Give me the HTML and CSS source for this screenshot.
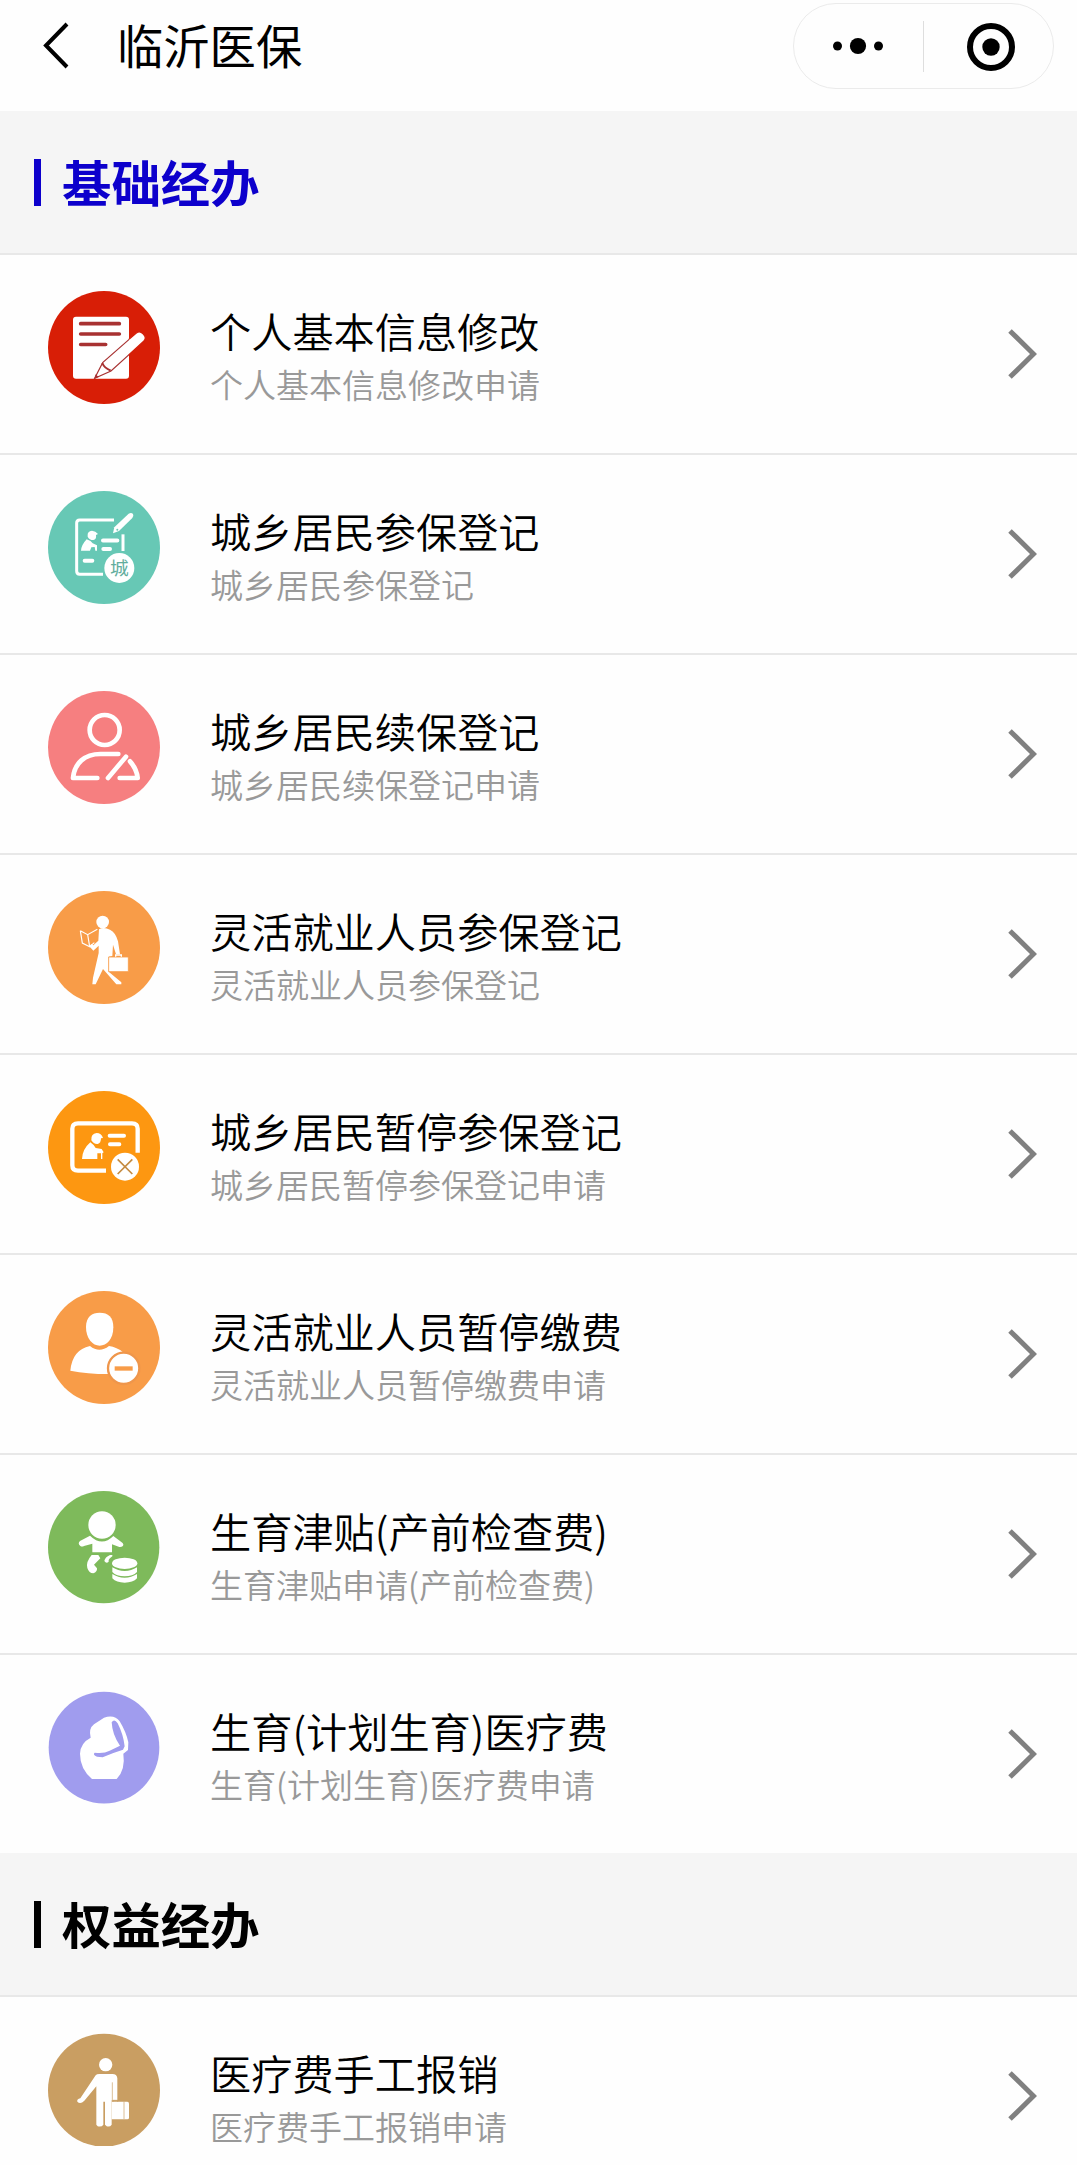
FILE: index.html
```html
<!DOCTYPE html>
<html lang="zh-CN">
<head>
<meta charset="utf-8">
<title>临沂医保</title>
<link rel="stylesheet" href="styles.css">
</head>
<body>
<div class="app">
  <header class="navbar">
    <svg class="back" viewBox="0 0 30 50" fill="none" stroke="#000" stroke-width="4"><path d="M26 4 5 25.500 26 47"/></svg>
    <h1 class="navbar-title">临沂医保</h1>
    <div class="capsule">
      <svg class="capsule-more" viewBox="0 0 60 40"><circle cx="9.500" cy="20" r="4.500"/><circle cx="30" cy="20" r="8.100"/><circle cx="50.500" cy="20" r="4.500"/></svg>
      <span class="capsule-divider"></span>
      <svg class="capsule-close" viewBox="0 0 50 50"><circle cx="25" cy="25" r="21" fill="none" stroke="#000" stroke-width="6"/><circle cx="25" cy="25" r="8.700"/></svg>
    </div>
  </header>

  <main>
    <section>
      <h2 class="section-title section-title--active"><span>基础经办</span></h2>
      <ul class="list">
        <li class="item">
          <svg class="icon" viewBox="54 62 336 339">
            <ellipse cx="222" cy="231.500" rx="168" ry="169.500" fill="#d81e06"/>
            <rect x="129" y="139" width="168" height="186" rx="9" fill="#fff"/>
            <g stroke="#a83232" stroke-width="11" stroke-linecap="round"><path d="M152 160H268M152 191H268M152 222.500H227"/></g>
            <path d="M194 324 218 277 318 189Q329 180 339 190L343 195Q350 204 341 213L243 302Z" fill="#fff" stroke="#a83232" stroke-width="3.500"/>
            <path d="M297 207 318 189Q329 180 339 190L343 195Q350 204 341 213L297 253" fill="#fff" stroke="#d81e06" stroke-width="4"/>
            <path d="M217 278Q222 292 242 301" fill="none" stroke="#a83232" stroke-width="6"/>
            <path d="M193 325 197 312 206 320Z" fill="#a83232"/>
          </svg>
          <div class="item-text"><h3>个人基本信息修改</h3><p>个人基本信息修改申请</p></div>
          <svg class="arrow" viewBox="0 0 30 52"><path d="M3 3 26.500 26 3 49"/></svg>
        </li>
        <li class="item">
          <svg class="icon" viewBox="54 62 336 339">
            <ellipse cx="222" cy="231.500" rx="168" ry="169.500" fill="#67c8b5"/>
            <g fill="none" stroke="#fff" stroke-width="9"><path d="M252 149H149Q140 149 140 158V302Q140 312 149 312H219"/><path d="M279 192V242"/></g>
            <g stroke="#fff" stroke-width="12" stroke-linecap="round"><path d="M219 210.500H262M220 236H240M164 271H187"/></g>
            <path d="M249 189 253 171 296 130Q304 125 309 131Q312 136 307 143L267 182Z" fill="#fff"/>
            <circle cx="262" cy="178" r="3" fill="#67c8b5"/>
            <path d="M173 194Q172 183 186 181Q197 182 204 191L198 194Q200 207 190 209Q178 209 173 199Z" fill="#fff"/>
            <path d="M153 241Q154 224 170 207Q184 212 188 219L201 225V241H196L194 230 184 231 180 241Z" fill="#fff"/>
            <circle cx="268" cy="293" r="45" fill="#fff"/>
            <text class="icon-label" x="268" y="313">城</text>
          </svg>
          <div class="item-text"><h3>城乡居民参保登记</h3><p>城乡居民参保登记</p></div>
          <svg class="arrow" viewBox="0 0 30 52"><path d="M3 3 26.500 26 3 49"/></svg>
        </li>
        <li class="item">
          <svg class="icon" viewBox="54 62 336 339">
            <ellipse cx="222" cy="231.500" rx="168" ry="169.500" fill="#f67f80"/>
            <g fill="none" stroke="#fff" stroke-width="14" stroke-linecap="round" stroke-linejoin="round">
              <circle cx="224" cy="179" r="45"/>
              <path d="M265 251H211C165 251 133 278 129 323H202M234 323 288 259M300 273Q320 295 323 323H269"/>
            </g>
          </svg>
          <div class="item-text"><h3>城乡居民续保登记</h3><p>城乡居民续保登记申请</p></div>
          <svg class="arrow" viewBox="0 0 30 52"><path d="M3 3 26.500 26 3 49"/></svg>
        </li>
        <li class="item">
          <svg class="icon" viewBox="54 62 336 339">
            <ellipse cx="222" cy="231.500" rx="168" ry="169.500" fill="#f89c48"/>
            <circle cx="218" cy="155" r="19" fill="#fff"/>
            <path d="M151 181 173 193 202 177M151 181 157 218 179 229 173 193M179 229 193 217" fill="none" stroke="#fff" stroke-width="3.500"/>
            <path d="M207 177Q221 169 240 178Q257 186 264 213L270 252H258L249 223 247 257 236 259V304L274 336V342H259L219 296 197 342H187L189 322 206 248V226L190 241 178 228 184 221 190 225 205 211Z" fill="#fff"/>
            <path d="M236 260H295V304H236Z" fill="#fff" stroke="#f89c48" stroke-width="2.500"/>
            <path d="M257 259V254H274V259" fill="none" stroke="#fff" stroke-width="4"/>
          </svg>
          <div class="item-text"><h3>灵活就业人员参保登记</h3><p>灵活就业人员参保登记</p></div>
          <svg class="arrow" viewBox="0 0 30 52"><path d="M3 3 26.500 26 3 49"/></svg>
        </li>
        <li class="item">
          <svg class="icon" viewBox="54 62 336 339">
            <ellipse cx="222" cy="231.500" rx="168" ry="169.500" fill="#fd9711"/>
            <path d="M228 301H144Q127 301 127 285V175Q127 159 144 159H306Q323 159 323 175V247" fill="none" stroke="#fff" stroke-width="13"/>
            <path d="M239 196H282M240 222H268" stroke="#fff" stroke-width="12" stroke-linecap="round"/>
            <path d="M184 210Q182 190 200 188Q214 188 219 203L213 204Q213 219 203 221Q191 222 184 210Z" fill="#fff"/>
            <path d="M156 266Q157 237 181 216Q189 221 197 233L215 236 221 246 217 249V266H213V249H202V266Z" fill="#fff"/>
            <circle cx="285" cy="289" r="42" fill="#fff"/>
            <path d="M263 267 307 311M307 267 263 311" stroke="#c58b40" stroke-width="5"/>
          </svg>
          <div class="item-text"><h3>城乡居民暂停参保登记</h3><p>城乡居民暂停参保登记申请</p></div>
          <svg class="arrow" viewBox="0 0 30 52"><path d="M3 3 26.500 26 3 49"/></svg>
        </li>
        <li class="item">
          <svg class="icon" viewBox="54 62 336 339">
            <ellipse cx="222" cy="231.500" rx="168" ry="169.500" fill="#f89c48"/>
            <path d="M121 301Q127 238 180 227Q208 250 237 227Q260 230 281 247L245 311Q178 312 121 301Z" fill="#fff"/>
            <path d="M168 170C168 139 186 127 209 127C235 127 250 140 250 171C250 207 230 226 209 226C188 226 168 205 168 170Z" fill="#fff"/>
            <circle cx="281" cy="294" r="47" fill="#fff" stroke="#ef964b" stroke-width="7"/>
            <path d="M254 294.500H308" stroke="#f89c48" stroke-width="13"/>
          </svg>
          <div class="item-text"><h3>灵活就业人员暂停缴费</h3><p>灵活就业人员暂停缴费申请</p></div>
          <svg class="arrow" viewBox="0 0 30 52"><path d="M3 3 26.500 26 3 49"/></svg>
        </li>
        <li class="item">
          <svg class="icon" viewBox="54 62 336 339">
            <ellipse cx="221" cy="230.500" rx="167" ry="168.500" fill="#7eba5b"/>
            <path d="M180 196 150 212Q142 220 151 227Q156 230 162 227L187 220V246H246V222L268 230Q280 231 280 222Q279 217 273 214L250 197Q216 231 180 196Z" fill="#fff"/>
            <circle cx="216" cy="164" r="41" fill="#fff"/>
            <path d="M185 254H205L211 264 192 283 201 294Q202 305 190 309Q177 309 172 293Q167 275 185 254ZM247 254H240Q225 260 223 272Q229 281 236 274Q234 267 247 258Z" fill="#fff"/>
            <ellipse cx="284" cy="279" rx="38" ry="17" fill="#fff"/>
            <path d="M247 291Q264 302 284 302T321 291V305Q309 318 284 318T247 305ZM247 311Q264 322 284 322T321 311V324Q309 337 284 337T247 324Z" fill="#fff"/>
          </svg>
          <div class="item-text"><h3>生育津贴(产前检查费)</h3><p>生育津贴申请(产前检查费)</p></div>
          <svg class="arrow" viewBox="0 0 30 52"><path d="M3 3 26.500 26 3 49"/></svg>
        </li>
        <li class="item">
          <svg class="icon" viewBox="54 62 336 339">
            <ellipse cx="222" cy="232" rx="166" ry="167.500" fill="#a09cee"/>
            <path d="M186 326Q150 295 150 250Q151 218 182 202Q175 175 192 162L222 142Q254 132 269 153Q288 184 295 216L294 239 280 250Q287 298 260 326Z" fill="#fff"/>
            <path d="M245 156Q253 144 263 159Q280 193 284 228L279 238Q246 248 218 261L201 259Q187 253 194 247Q221 251 239 241L270 226Q247 194 245 156Z" fill="#a09cee"/>
          </svg>
          <div class="item-text"><h3>生育(计划生育)医疗费</h3><p>生育(计划生育)医疗费申请</p></div>
          <svg class="arrow" viewBox="0 0 30 52"><path d="M3 3 26.500 26 3 49"/></svg>
        </li>
      </ul>
    </section>

    <section>
      <h2 class="section-title"><span>权益经办</span></h2>
      <ul class="list">
        <li class="item">
          <svg class="icon" viewBox="54 60 336 339">
            <ellipse cx="222" cy="231.500" rx="168" ry="169.500" fill="#c99e62"/>
            <circle cx="227" cy="155" r="20" fill="#fff"/>
            <path d="M197 187Q200 183 208 183H247Q261 183 262 196V262H245V335Q240 343 230 340L225 335V266H220V335Q215 343 203 340L199 335V220L163 263Q151 275 142 266Q140 258 151 256Z" fill="#fff"/>
            <path d="M245 266H292Q297 266 297 272V314Q297 319 292 319H245Z" fill="#fff"/>
            <path d="M247 208V263M282 266V318" stroke="#c99e62" stroke-width="2"/>
            <path d="M249 266V262H263V266" fill="none" stroke="#c99e62" stroke-width="2.500"/>
          </svg>
          <div class="item-text"><h3>医疗费手工报销</h3><p>医疗费手工报销申请</p></div>
          <svg class="arrow" viewBox="0 0 30 52"><path d="M3 3 26.500 26 3 49"/></svg>
        </li>
      </ul>
    </section>
  </main>
</div>
</body>
</html>
```
FILE: styles.css
```css
* {
  box-sizing: border-box;
  margin: 0;
  padding: 0;
}

body {
  background: #fefefe;
  color: #000;
  font-family: "Noto Sans CJK SC", sans-serif;
}

.app {
  width: 1077px;
  height: 2165px;
  overflow: hidden;
}

.navbar {
  display: flex;
  align-items: flex-start;
  height: 111px;
  padding: 3px 23px 0 41px;
}

.back {
  width: 30px;
  height: 50px;
  margin-top: 17px;
}

.navbar-title {
  margin: 11px 0 0 46px;
  font-size: 46.3px;
  font-weight: 400;
  line-height: 60px;
}

.capsule {
  display: flex;
  align-items: center;
  width: 261px;
  height: 86px;
  margin-left: auto;
  border: 1px solid #ebebeb;
  border-radius: 43px;
}

.capsule-more {
  width: 60px;
  height: 40px;
  margin-left: 34px;
}

.capsule-divider {
  width: 1px;
  height: 51px;
  margin-left: 35px;
  background: #dedede;
}

.capsule-close {
  width: 50px;
  height: 50px;
  margin: 2px 0 0 42px;
}

.section-title {
  display: flex;
  align-items: center;
  gap: 21px;
  height: 144px;
  padding-left: 34px;
  border-bottom: 2px solid #e8e8e8;
  background: #f5f5f5;
  font-size: 49.4px;
  font-weight: 700;
  line-height: 72px;
}

.section-title span {
  padding-bottom: 3px;
}

.section-title::before {
  content: "";
  width: 7px;
  height: 47px;
  margin-top: 1px;
  background: currentColor;
}

.section-title--active {
  color: #0d00cc;
}

.list {
  list-style: none;
}

.item {
  display: flex;
  align-items: flex-start;
  height: 200px;
  padding: 36px 40px 0 48px;
  border-bottom: 2px solid #e8e8e8;
}

.item:last-child {
  height: 198px;
  border-bottom: 0;
}

.icon {
  width: 112px;
  height: 113px;
}

.icon-label {
  fill: #62ad9d;
  font-size: 56px;
  text-anchor: middle;
}

.item-text {
  margin: 12px 0 0 50px;
}

.item-text h3 {
  font-size: 41.2px;
  font-weight: 350;
  line-height: 54px;
}

.item-text p {
  color: #999;
  font-size: 33px;
  font-weight: 350;
  line-height: 54px;
}

.arrow {
  width: 30px;
  height: 52px;
  margin: 37px 0 0 auto;
  fill: none;
  stroke: #808080;
  stroke-width: 5;
}
```
